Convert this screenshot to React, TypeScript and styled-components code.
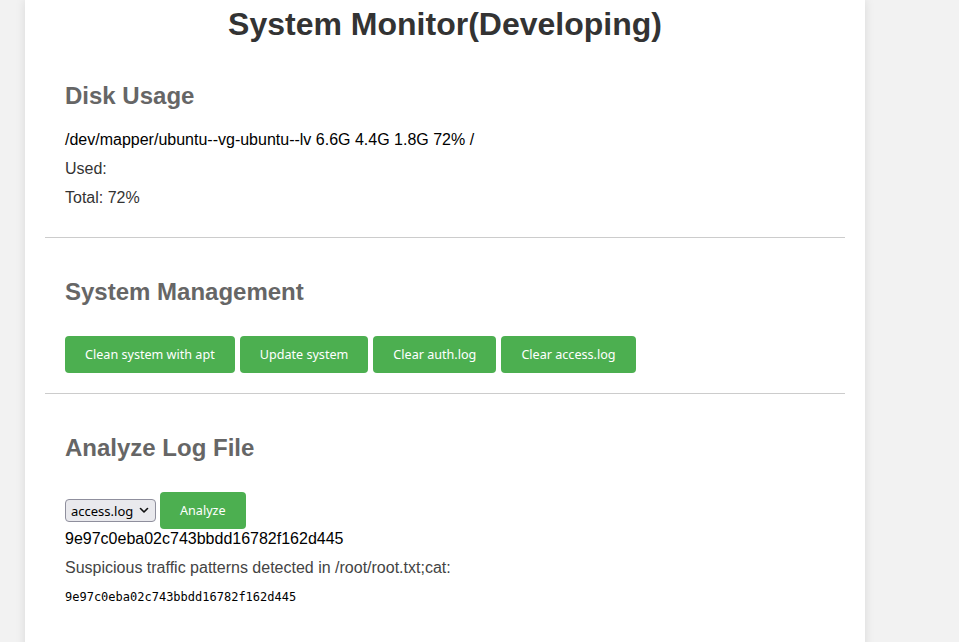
import React from "react";
import styled, { createGlobalStyle } from "styled-components";

const Global = createGlobalStyle`
  html, body { margin: 0; padding: 0; background: #f2f2f2; }
  body { font-family: "Liberation Sans", Arial, sans-serif; color: #333; }
`;

const Container = styled.div`
  width: 800px;
  margin-left: 25px;
  padding: 6px 20px 20px;
  background: #fff;
  box-shadow: 0 0 10px rgba(0, 0, 0, 0.1);
  min-height: 642px;
  box-sizing: content-box;
`;

const Title = styled.h1`
  margin: 0;
  font-size: 32px;
  line-height: 37px;
  font-weight: bold;
  color: #333;
  text-align: center;
`;

const Section = styled.section<{ $top: number; $bottom: number; $divider?: boolean }>`
  padding: ${(p) => p.$top}px 20px ${(p) => p.$bottom}px;
  border-bottom: ${(p) => (p.$divider ? "1px solid #ccc" : "none")};
`;

const Heading = styled.h2`
  margin: 0;
  font-size: 24px;
  line-height: 43px;
  font-weight: bold;
  color: #666;
`;

const InfoLines = styled.div`
  margin-top: 8px;
`;

const Line = styled.p<{ $dark?: boolean }>`
  margin: 0;
  font-size: 16px;
  line-height: 29px;
  color: ${(p) => (p.$dark ? "#000" : "#333")};
`;

const ButtonRow = styled.div`
  display: flex;
  gap: 5px;
  margin-top: 23px;
`;

const GreenButton = styled.button`
  background: #4caf50;
  color: #fff;
  border: none;
  border-radius: 4px;
  height: 37px;
  padding: 0 20px;
  font-family: "Noto Sans", sans-serif;
  font-size: 12.6px;
  cursor: pointer;
`;

const AnalyzeRow = styled.div`
  display: flex;
  align-items: center;
  gap: 4px;
  margin-top: 23px;
`;

const SelectWrap = styled.div`
  position: relative;
  display: inline-flex;
`;

const Select = styled.select`
  appearance: none;
  -webkit-appearance: none;
  font-family: "Noto Sans", sans-serif;
  font-size: 13px;
  color: #000;
  height: 23px;
  width: 91px;
  padding: 0 20px 0 5px;
  background: #e9e9ed;
  border: 1px solid #8f8f9d;
  border-radius: 4px;
  box-sizing: border-box;
`;

const Chevron = styled.svg`
  position: absolute;
  right: 7px;
  top: 8px;
  width: 10px;
  height: 7px;
  pointer-events: none;
`;

const HashLine = styled.div`
  font-size: 16px;
  line-height: 18px;
  color: #000;
  margin-top: 1px;
`;

const Finding = styled.p`
  margin: 11px 0 0;
  font-size: 16px;
  line-height: 18px;
  color: #444;
`;

const Mono = styled.pre`
  margin: 13px 0 0;
  font-family: "DejaVu Sans Mono", monospace;
  font-size: 12px;
  line-height: 14px;
  color: #000;
`;

export default function App() {
  return (
    <>
      <Global />
      <Container>
        <Title>System Monitor(Developing)</Title>
        <Section $top={31} $bottom={25} $divider>
          <Heading>Disk Usage</Heading>
          <InfoLines>
            <Line $dark>/dev/mapper/ubuntu--vg-ubuntu--lv 6.6G 4.4G 1.8G 72% /</Line>
            <Line>Used:</Line>
            <Line>Total: 72%</Line>
          </InfoLines>
        </Section>
        <Section $top={32} $bottom={20} $divider>
          <Heading>System Management</Heading>
          <ButtonRow>
            <GreenButton>Clean system with apt</GreenButton>
            <GreenButton>Update system</GreenButton>
            <GreenButton>Clear auth.log</GreenButton>
            <GreenButton>Clear access.log</GreenButton>
          </ButtonRow>
        </Section>
        <Section $top={32} $bottom={20}>
          <Heading>Analyze Log File</Heading>
          <AnalyzeRow>
            <SelectWrap>
              <Select defaultValue="access.log">
                <option value="access.log">access.log</option>
                <option value="auth.log">auth.log</option>
              </Select>
              <Chevron viewBox="0 0 10 7" fill="none">
                <path d="M1.5 1.5 L5 5 L8.5 1.5" stroke="#111" strokeWidth="1.6" strokeLinecap="round" strokeLinejoin="round" />
              </Chevron>
            </SelectWrap>
            <GreenButton>Analyze</GreenButton>
          </AnalyzeRow>
          <HashLine>9e97c0eba02c743bbdd16782f162d445</HashLine>
          <Finding>Suspicious traffic patterns detected in /root/root.txt;cat:</Finding>
          <Mono>9e97c0eba02c743bbdd16782f162d445</Mono>
        </Section>
      </Container>
    </>
  );
}
